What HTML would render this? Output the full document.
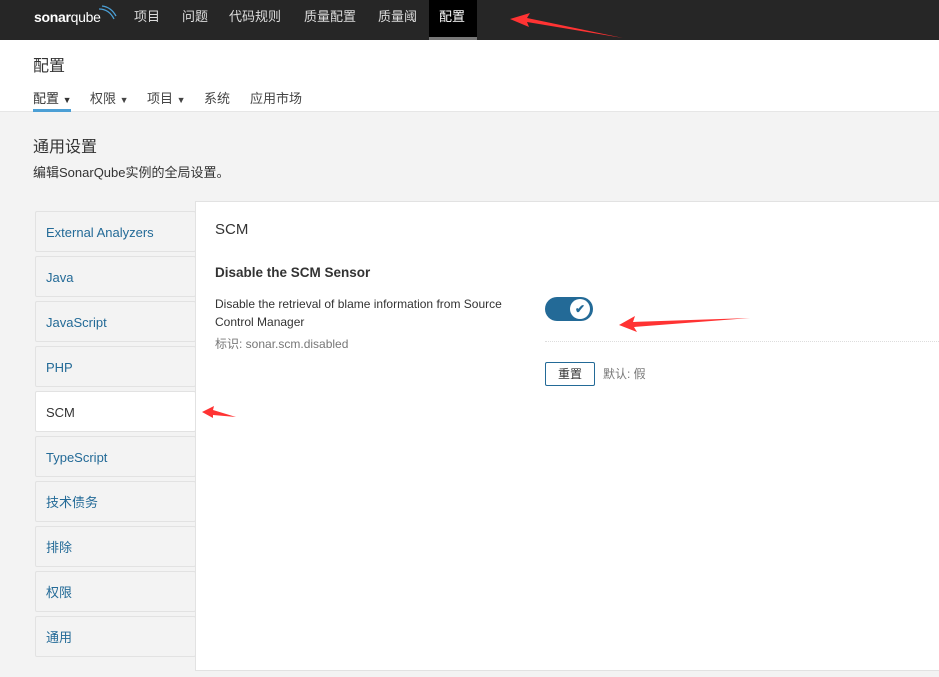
<!DOCTYPE html>
<html><head><meta charset="utf-8"><style>
*{box-sizing:border-box;margin:0;padding:0}
body{width:939px;height:677px;overflow:hidden;background:#f3f3f3;font-family:"Liberation Sans","Noto Sans CJK SC",sans-serif;color:#444;position:relative}
.top{position:absolute;left:0;top:0;width:939px;height:40px;background:#262626}
.top span{position:absolute;top:0;line-height:34px;font-size:13px;color:#ddd}
.act{position:absolute;left:429px;top:0;width:48px;height:40px;background:#000;border-bottom:3px solid #777}
.hdr{position:absolute;left:0;top:40px;width:939px;height:72px;background:#fff;border-bottom:1px solid #e6e6e6}
.t{position:absolute;font-size:13px}
.item{position:absolute;left:35px;width:161px;height:41px;background:#f3f3f3;border:1px solid #e2e2e2;border-radius:2px;font-size:13px;color:#236a97;padding-left:10px;line-height:41px}
.panel{position:absolute;left:195px;top:201px;width:750px;height:470px;background:#fff;border:1px solid #e2e2e2}
</style></head><body>
<div class="top">
<div class="act"></div>
<span style="left:34px;font-weight:bold;font-size:14px;color:#fff;letter-spacing:-0.3px">sonar<span style="position:static;font-weight:normal;color:#fff;font-size:14px">qube</span></span>
<svg style="position:absolute;left:97px;top:5px" width="20" height="16"><path d="M2 4 Q12 4 17 14 M5 1 Q14 2 19 11" stroke="#4b9fd5" stroke-width="1.3" fill="none"/></svg>
<span style="left:134px">项目</span><span style="left:182px">问题</span><span style="left:229px">代码规则</span><span style="left:304px">质量配置</span><span style="left:378px">质量阈</span><span style="left:439px;color:#fff">配置</span>
</div>
<svg style="position:absolute;left:505px;top:10px" width="120" height="30"><path d="M5 9 L25 3 L22 8 L118 28 L22 12 L24 17 Z" fill="#f33"/></svg>
<div class="hdr">
<div class="t" style="left:33px;top:12px;font-size:16px;color:#333">配置</div>
<div class="t" style="left:33px;top:48px;color:#333">配置 <span style="font-size:9px">▼</span></div>
<div style="position:absolute;left:33px;top:69px;width:38px;height:3px;background:#4b9fd5"></div>
<div class="t" style="left:90px;top:48px">权限 <span style="font-size:9px">▼</span></div>
<div class="t" style="left:147px;top:48px">项目 <span style="font-size:9px">▼</span></div>
<div class="t" style="left:204px;top:48px">系统</div>
<div class="t" style="left:250px;top:48px">应用市场</div>
</div>
<div class="t" style="left:33px;top:133px;font-size:16px;color:#333">通用设置</div>
<div class="t" style="left:33px;top:162px;color:#333">编辑SonarQube实例的全局设置。</div>
<div class="item" style="top:211px">External Analyzers</div>
<div class="item" style="top:256px">Java</div>
<div class="item" style="top:301px">JavaScript</div>
<div class="item" style="top:346px">PHP</div>
<div class="item" style="top:391px;background:#fff;color:#333">SCM</div>
<div class="item" style="top:436px">TypeScript</div>
<div class="item" style="top:481px">技术债务</div>
<div class="item" style="top:526px">排除</div>
<div class="item" style="top:571px">权限</div>
<div class="item" style="top:616px">通用</div>
<div class="panel"></div>
<div class="t" style="left:215px;top:221px;font-size:15px;color:#333">SCM</div>
<div class="t" style="left:215px;top:265px;font-size:13.5px;font-weight:bold;color:#333">Disable the SCM Sensor</div>
<div class="t" style="left:215px;top:295px;font-size:12px;line-height:18px;color:#333;width:300px">Disable the retrieval of blame information from Source Control Manager</div>
<div class="t" style="left:215px;top:335px;font-size:12px;color:#777">标识: sonar.scm.disabled</div>
<div style="position:absolute;left:545px;top:297px;width:48px;height:24px;border-radius:12px;background:#236a97"></div>
<div style="position:absolute;left:570px;top:299px;width:20px;height:20px;border-radius:50%;background:#fff;color:#236a97;font-size:12px;text-align:center;line-height:20px;font-weight:bold">✔</div>
<div style="position:absolute;left:545px;top:341px;width:394px;border-top:1px dotted #ddd"></div>
<div style="position:absolute;left:545px;top:362px;width:50px;height:24px;border:1px solid #236a97;border-radius:2px;font-size:12px;text-align:center;line-height:22px;color:#333">重置</div>
<div class="t" style="left:603px;top:365px;font-size:12px;color:#777">默认: 假</div>
<svg style="position:absolute;left:615px;top:312px" width="140" height="24"><path d="M4 13 L20 4 L18 10 L135 6 L19 15 L22 20 Z" fill="#f33"/></svg>
<svg style="position:absolute;left:198px;top:404px" width="42" height="16"><path d="M4 8 L16 2 L15 6 L38 13 L15 11 L15 14 Z" fill="#f33"/></svg>
</body></html>
